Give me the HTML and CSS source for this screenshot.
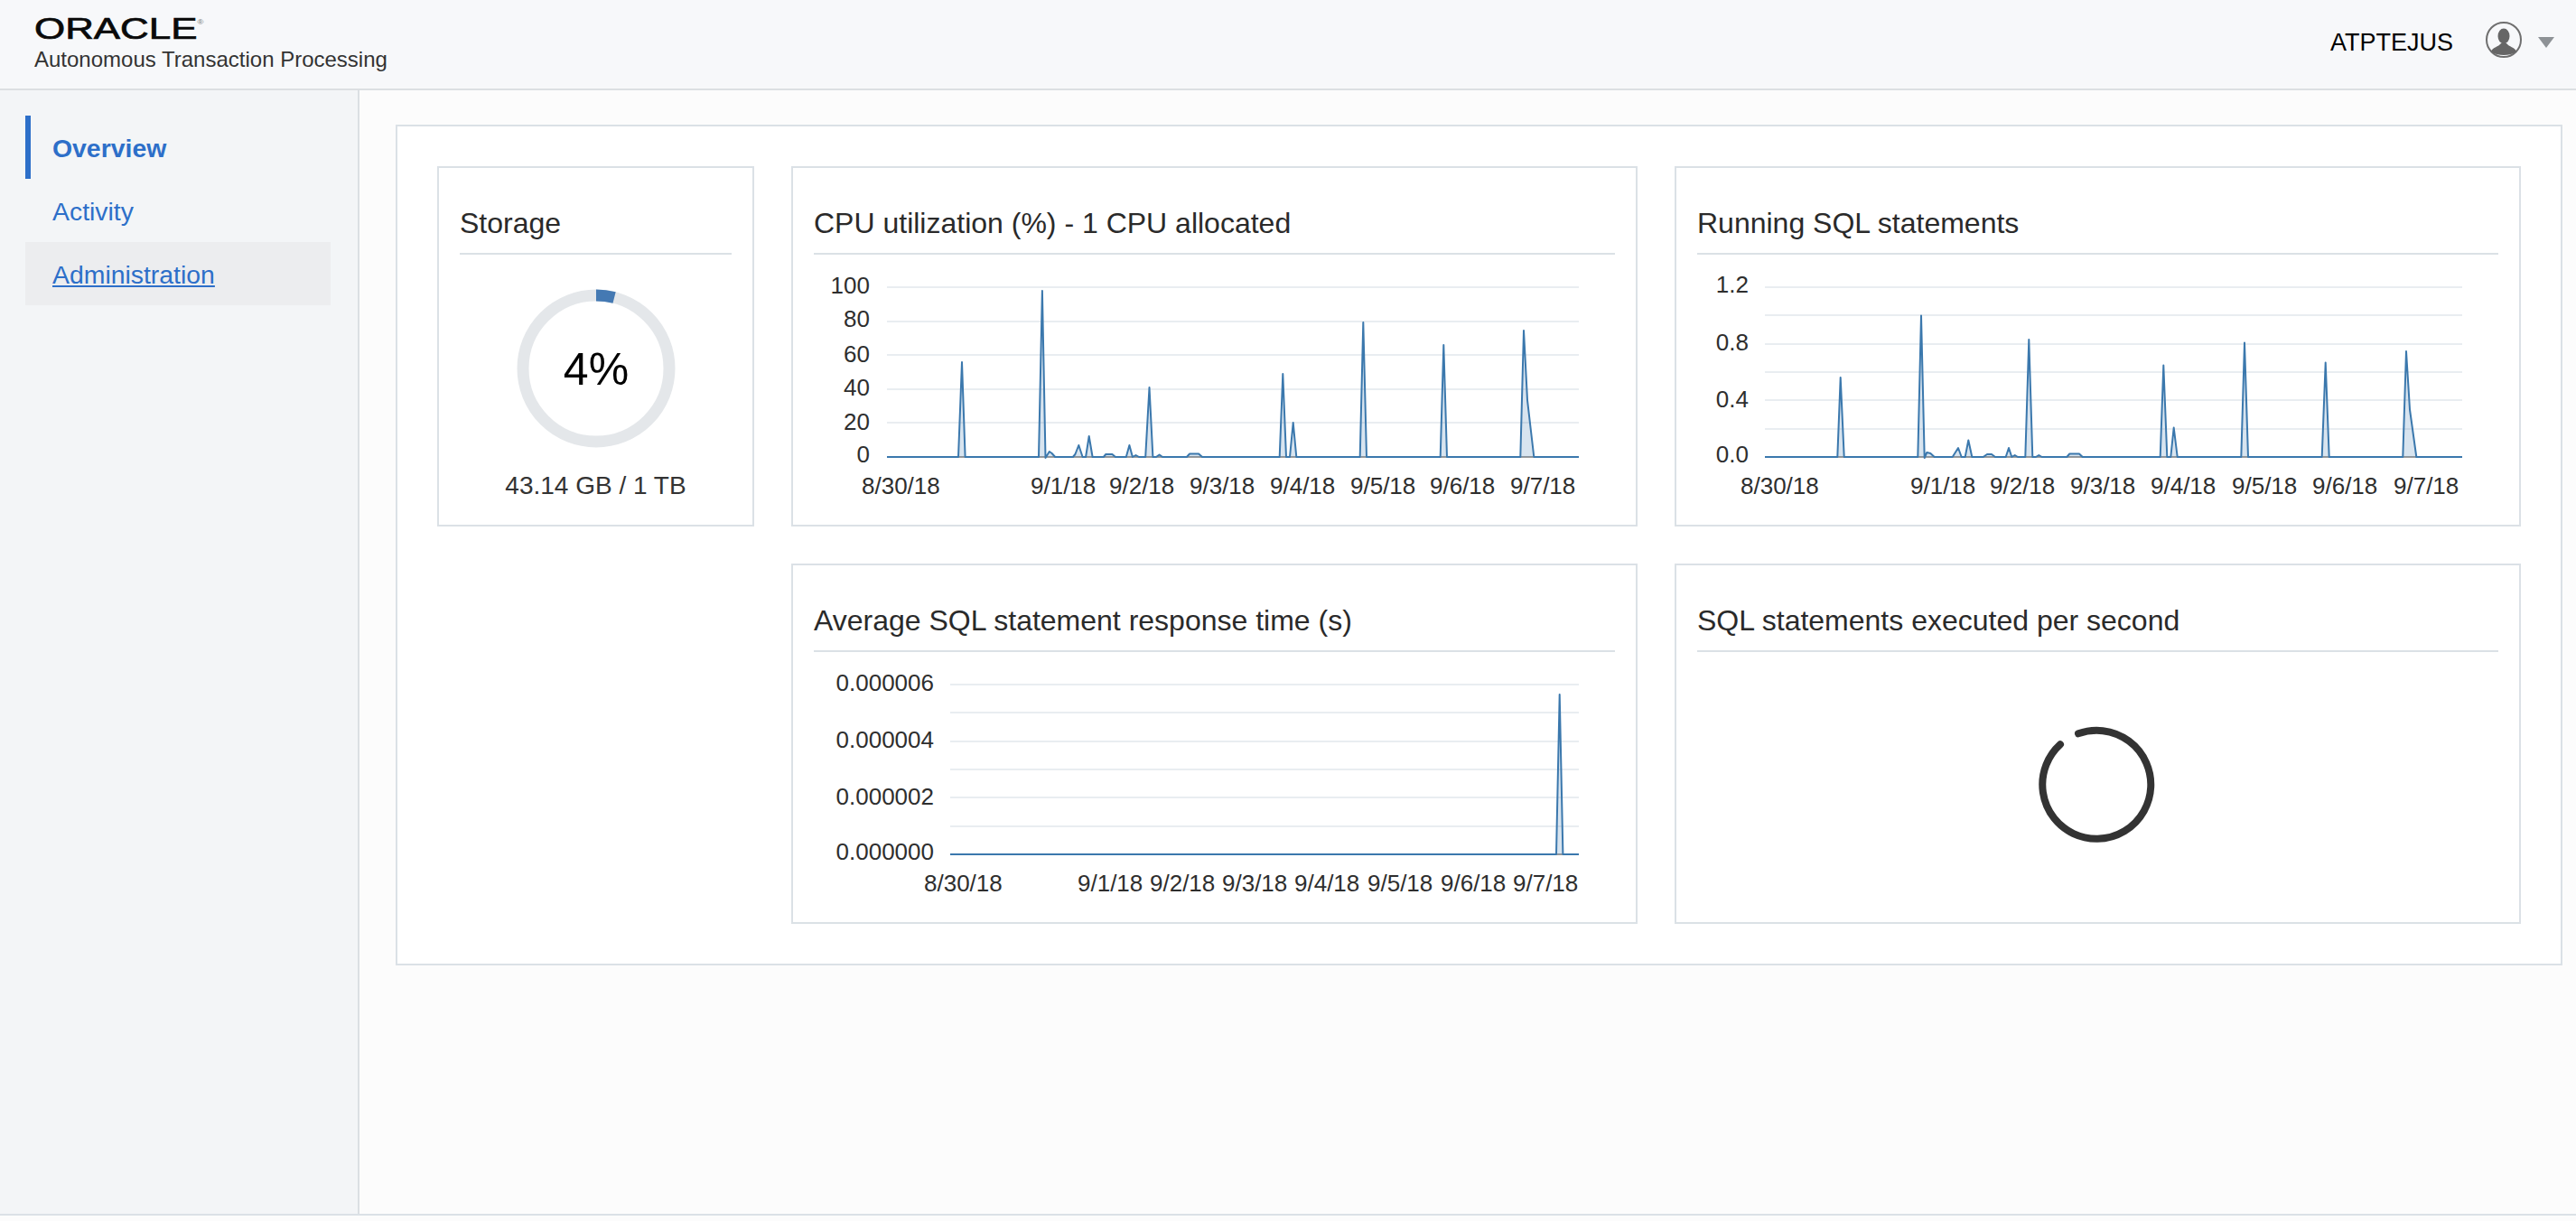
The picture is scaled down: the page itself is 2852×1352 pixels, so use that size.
FILE: index.html
```html
<!DOCTYPE html>
<html lang="en">
<head>
    <meta charset="UTF-8">
    <title>Autonomous Transaction Processing</title>
    <link rel="stylesheet" href="styles.css">
</head>
<body>
    <div class="page">
        <header class="topbar">
            <div class="brand">
                <div class="logo">ORACLE<span class="reg">®</span></div>
                <div class="product">Autonomous Transaction Processing</div>
            </div>
            <div class="user">
                <span class="user-name">ATPTEJUS</span>
                <svg class="avatar" width="40" height="40" viewBox="0 0 40 40">
                    <circle cx="20" cy="20" r="19" fill="none" stroke="#6f6f6f" stroke-width="2"/>
                    <ellipse cx="20" cy="16" rx="6.5" ry="8.5" fill="#666"/>
                    <path d="M6 33 C8 28 14 28 17 24 L23 24 C26 28 32 28 34 33 C30 36 25 37 20 37 C15 37 10 36 6 33 Z" fill="#666"/>
                </svg>
                <span class="caret"></span>
            </div>
        </header>

        <div class="layout">
            <nav class="sidebar">
                <a class="nav-item active">Overview</a>
                <a class="nav-item">Activity</a>
                <a class="nav-item hover">Administration</a>
            </nav>

            <main class="main">
                <section class="panel">
                    <div class="card">
                        <h3>Storage</h3>
                        <div class="storage">
                            <svg class="donut" width="180" height="180" viewBox="0 0 180 180">
                                <circle cx="90" cy="90" r="81" fill="none" stroke="#e4e7ea" stroke-width="13"/>
                                <path d="M90 9 A81 81 0 0 1 110.1 11.5" fill="none" stroke="#4479b3" stroke-width="13"/>
                                <text class="donut-value" x="90" y="108">4%</text>
                            </svg>
                            <div class="storage-label">43.14 GB / 1 TB</div>
                        </div>
                    </div>

                    <div class="card">
                        <h3>CPU utilization (%) - 1 CPU allocated</h3>
                        <svg class="chart" width="887" height="280" viewBox="901 282 887 280">
                            <g class="grid">
                                <line x1="982" x2="1748" y1="318" y2="318"/>
                                <line x1="982" x2="1748" y1="356" y2="356"/>
                                <line x1="982" x2="1748" y1="393" y2="393"/>
                                <line x1="982" x2="1748" y1="431" y2="431"/>
                                <line x1="982" x2="1748" y1="468" y2="468"/>
                            </g>
                            <line class="axis" x1="982" x2="1748" y1="506" y2="506"/>
                            <polyline class="series" points="982,506 1061,506 1065,401 1068.6,506 1150,506 1153.9,322 1157.5,507 1161.8,500 1164.6,502 1168.2,506 1187.9,506 1190.4,503 1194.3,493 1198.6,506 1202.1,506 1205.7,483 1209.6,506 1221.8,506 1224.3,503 1231.4,503 1235,506 1246.8,506 1250.4,493 1253.9,506 1257.5,504 1261,506 1268.2,506 1272.5,429 1276.4,506 1280,506 1283.6,503.5 1287.1,506 1313.9,506 1317.1,502.5 1327.1,502.5 1331.1,506 1416.7,506 1420.3,414 1424,506 1428,506 1431.7,468 1435.3,506 1505.7,506 1509.3,357 1513,506 1594.7,506 1598.3,382 1602,506 1683.3,506 1687,366 1691,443 1698.3,506 1748,506"/>
                            <g class="tick tick-y">
                                <text x="963" y="325">100</text>
                                <text x="963" y="362">80</text>
                                <text x="963" y="401">60</text>
                                <text x="963" y="438">40</text>
                                <text x="963" y="476">20</text>
                                <text x="963" y="512">0</text>
                            </g>
                            <g class="tick">
                                <text x="954" y="547">8/30/18</text>
                                <text x="1141" y="547">9/1/18</text>
                                <text x="1228" y="547">9/2/18</text>
                                <text x="1317" y="547">9/3/18</text>
                                <text x="1406" y="547">9/4/18</text>
                                <text x="1495" y="547">9/5/18</text>
                                <text x="1583" y="547">9/6/18</text>
                                <text x="1672" y="547">9/7/18</text>
                            </g>
                        </svg>
                    </div>

                    <div class="card">
                        <h3>Running SQL statements</h3>
                        <svg class="chart" width="887" height="280" viewBox="1879 282 887 280">
                            <g class="grid">
                                <line x1="1954" x2="2726" y1="318" y2="318"/>
                                <line x1="1954" x2="2726" y1="349" y2="349"/>
                                <line x1="1954" x2="2726" y1="381" y2="381"/>
                                <line x1="1954" x2="2726" y1="412" y2="412"/>
                                <line x1="1954" x2="2726" y1="443" y2="443"/>
                                <line x1="1954" x2="2726" y1="475" y2="475"/>
                            </g>
                            <line class="axis" x1="1954" x2="2726" y1="506" y2="506"/>
                            <polyline class="series" points="1954,506 2034.3,506 2037.7,418 2041.7,506 2123.3,506 2127,349.5 2130.7,507 2133.3,501 2137.3,502 2141.7,506 2161.7,506 2168,496 2171.7,506 2175.7,506 2179.3,487.5 2183.3,506 2195.7,506 2200,503 2205,503 2209,506 2220.7,506 2224,496 2227.3,506 2230.7,504 2234,506 2242.3,506 2246.3,376 2250.3,506 2254,506 2257.3,504 2260.7,506 2288.3,506 2291.3,502.5 2302,502.5 2305.7,506 2391.7,506 2395.3,404.5 2399.3,506 2403.3,506 2406.7,473.5 2410.7,506 2481.3,506 2485,379.5 2489,506 2570.7,506 2574.7,401.5 2578.7,506 2660.3,506 2664,389 2668,453.5 2675.3,506 2726,506"/>
                            <g class="tick tick-y">
                                <text x="1936" y="324">1.2</text>
                                <text x="1936" y="388">0.8</text>
                                <text x="1936" y="451">0.4</text>
                                <text x="1936" y="512">0.0</text>
                            </g>
                            <g class="tick">
                                <text x="1927" y="547">8/30/18</text>
                                <text x="2115" y="547">9/1/18</text>
                                <text x="2203" y="547">9/2/18</text>
                                <text x="2292" y="547">9/3/18</text>
                                <text x="2381" y="547">9/4/18</text>
                                <text x="2471" y="547">9/5/18</text>
                                <text x="2560" y="547">9/6/18</text>
                                <text x="2650" y="547">9/7/18</text>
                            </g>
                        </svg>
                    </div>

                    <div class="card card-avg">
                        <h3>Average SQL statement response time (s)</h3>
                        <svg class="chart" width="887" height="280" viewBox="901 722 887 280">
                            <g class="grid">
                                <line x1="1052" x2="1748" y1="758" y2="758"/>
                                <line x1="1052" x2="1748" y1="789" y2="789"/>
                                <line x1="1052" x2="1748" y1="821" y2="821"/>
                                <line x1="1052" x2="1748" y1="852" y2="852"/>
                                <line x1="1052" x2="1748" y1="883" y2="883"/>
                                <line x1="1052" x2="1748" y1="915" y2="915"/>
                            </g>
                            <line class="axis" x1="1052" x2="1748" y1="946" y2="946"/>
                            <polyline class="series" points="1052,946 1723,946 1726.7,769 1730.4,946 1748,946"/>
                            <g class="tick tick-y">
                                <text x="1034" y="765">0.000006</text>
                                <text x="1034" y="828">0.000004</text>
                                <text x="1034" y="891">0.000002</text>
                                <text x="1034" y="952">0.000000</text>
                            </g>
                            <g class="tick">
                                <text x="1023" y="987">8/30/18</text>
                                <text x="1193" y="987">9/1/18</text>
                                <text x="1273" y="987">9/2/18</text>
                                <text x="1353" y="987">9/3/18</text>
                                <text x="1433" y="987">9/4/18</text>
                                <text x="1514" y="987">9/5/18</text>
                                <text x="1595" y="987">9/6/18</text>
                                <text x="1675" y="987">9/7/18</text>
                            </g>
                        </svg>
                    </div>

                    <div class="card">
                        <h3>SQL statements executed per second</h3>
                        <div class="loading">
                            <svg width="136" height="136" viewBox="2254 800 136 136">
                                <path d="M2300 812.3 A60 60 0 1 1 2280 824.3" fill="none" stroke="#333" stroke-width="8" stroke-linecap="round"/>
                            </svg>
                        </div>
                    </div>
                </section>
            </main>
        </div>

        <footer class="footer"></footer>
    </div>
</body>
</html>
```

FILE: styles.css
```css
body {
    margin: 0;
    font-family: "Liberation Sans", Arial, sans-serif;
    color: #2a2a2a;
    background-color: #fcfcfc;
}
.page {
    display: flex;
    flex-direction: column;
    height: 100vh;
}
.topbar {
    display: flex;
    justify-content: space-between;
    align-items: center;
    flex: none;
    height: 98px;
    padding: 0 24px 0 38px;
    background: #f7f8fa;
    border-bottom: 2px solid #dcdfe2;
}
.brand {
    display: flex;
    flex-direction: column;
}
.logo {
    height: 24px;
    margin-top: 2px;
    font-size: 33px;
    line-height: 24px;
    color: #0a0a0a;
    -webkit-text-stroke: 0.7px #0a0a0a;
    transform: scaleX(1.33);
    transform-origin: left center;
    white-space: nowrap;
}
.reg {
    font-size: 7px;
    line-height: 0;
    vertical-align: 16px;
    color: #777;
    -webkit-text-stroke: 0;
}
.product {
    margin-top: 8px;
    font-size: 24px;
    line-height: 28px;
    color: #333;
}
.user {
    display: flex;
    align-items: center;
    padding-bottom: 4px;
}
.user-name {
    font-size: 27px;
    color: #000;
}
.avatar {
    margin: 0 18px 6px 36px;
}
.caret {
    width: 0;
    height: 0;
    border-left: 9px solid transparent;
    border-right: 9px solid transparent;
    border-top: 12px solid #8e9296;
}
.layout {
    display: flex;
    flex: 1;
    min-height: 0;
}
.sidebar {
    display: flex;
    flex-direction: column;
    flex: none;
    box-sizing: border-box;
    width: 398px;
    padding: 28px 30px 0 28px;
    background: #f3f5f7;
    border-right: 2px solid #dbdfe3;
}
.nav-item {
    display: flex;
    align-items: center;
    box-sizing: border-box;
    height: 70px;
    padding: 3px 0 0 30px;
    font-size: 28.4px;
    color: #2d6fc9;
}
.nav-item.active {
    padding-left: 24px;
    border-left: 6px solid #2d6fc9;
    font-weight: bold;
}
.nav-item.hover {
    background: #ecedef;
    text-decoration: underline;
}
.main {
    flex: 1;
    padding: 38px 15px 0 40px;
}
.panel {
    display: grid;
    grid-template-columns: 351px 937px 937px;
    grid-template-rows: 399px 399px;
    column-gap: 41px;
    row-gap: 41px;
    padding: 44px;
    background: #fff;
    border: 2px solid #dbe1e6;
}
.card {
    display: flex;
    flex-direction: column;
    box-sizing: border-box;
    padding: 0 23px;
    background: #fff;
    border: 2px solid #dbe1e6;
}
.card-avg {
    grid-column: 2;
}
h3 {
    margin: 0;
    padding: 43px 0 15px;
    font-size: 32px;
    font-weight: normal;
    line-height: 36px;
    border-bottom: 2px solid #dbe1e6;
}
.storage {
    text-align: center;
}
.donut {
    display: block;
    margin: 36px auto 0;
}
.donut-value {
    font-size: 50px;
    fill: #000;
    text-anchor: middle;
}
.storage-label {
    margin-top: 24px;
    font-size: 28px;
    line-height: 32px;
    color: #333;
}
.chart {
    display: block;
}
.grid line {
    stroke: #e9edf1;
    stroke-width: 2;
}
.axis {
    stroke: #9a9a9a;
    stroke-width: 2;
}
.series {
    fill: rgba(60, 120, 175, 0.2);
    stroke: #3b78ad;
    stroke-width: 2;
    stroke-linejoin: round;
}
.tick {
    font-size: 26px;
    fill: #2e2e2e;
}
.tick-y {
    text-anchor: end;
}
.loading {
    display: flex;
    flex: 1;
    justify-content: center;
    align-items: center;
    padding-bottom: 7px;
}
.footer {
    flex: none;
    height: 6px;
    background: #fcfcfc;
    border-top: 2px solid #dbe1e6;
}
```
